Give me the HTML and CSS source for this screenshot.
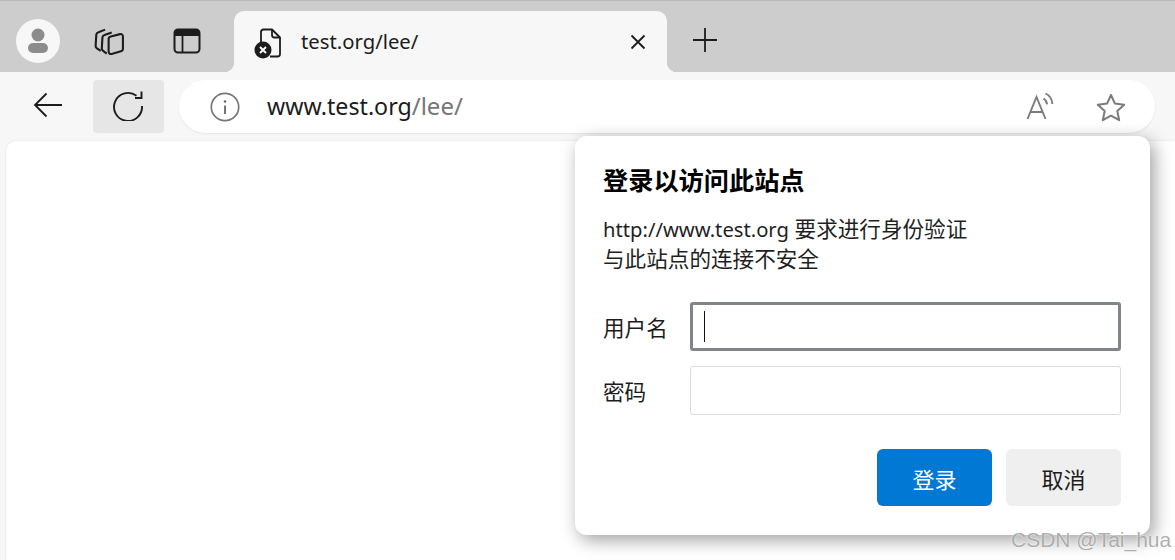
FILE: index.html
```html
<!DOCTYPE html>
<html lang="zh-CN">
<head>
  <meta charset="UTF-8">
  <meta name="viewport" content="width=device-width, initial-scale=1.0">
  <title>test.org/lee/</title>
  <link rel="stylesheet" href="styles.css">
</head>
<body>
  <div class="tabstrip">
    <div class="avatar">
      <svg width="44" height="44" viewBox="0 0 44 44"><circle cx="22" cy="16" r="6.5" fill="#8c8c8c"/><rect x="12" y="24" width="20" height="10" rx="5" fill="#8c8c8c"/></svg>
    </div>
    <div class="strip-btn btn-collections">
      <svg width="33" height="33" viewBox="0 0 30 30" fill="none" stroke="#1c1c1c" stroke-width="1.9" stroke-linejoin="round"><path d="M7 23.5 3.6 21.2c-.9-.6-1.3-1.3-1.2-2.3L3 8.8c.1-1.2.9-2 2-2.3L11 4.200"/><path d="M12.500 26 9.200 23.600c-.8-.6-1.200-1.300-1.200-2.200l.6-10.200c.1-1.100.8-1.900 1.900-2.200L17 6.800"/><path d="M16.200 10.400l8.400-2.100c1.500-.3 2.600.6 2.600 2.100v11.200c0 1.200-.7 2-1.800 2.300l-8.500 2.400c-1.500.4-2.700-.6-2.700-2.100V12.700c0-1.100.8-2 2-2.300z"/></svg>
    </div>
    <div class="strip-btn btn-vertical">
      <svg width="28" height="26" viewBox="0 0 28 26" fill="none"><rect x="1.500" y="1.500" width="25" height="23" rx="3.500" stroke="#1c1c1c" stroke-width="2"/><path d="M1.500 5c0-2 1.500-3.500 3.500-3.500h18c2 0 3.500 1.500 3.500 3.500v3h-25z" fill="#1c1c1c"/><path d="M9.500 8v16" stroke="#1c1c1c" stroke-width="1.800"/></svg>
    </div>
    <div class="tab">
      <svg class="tab-icon" width="28" height="32" viewBox="0 0 28 32" fill="none"><path d="M7 16V5c0-1.600 1-2.500 2.500-2.500H18l8 8V27c0 1.500-1 2.500-2.500 2.500H16" stroke="#1c1c1c" stroke-width="1.800" stroke-linejoin="round"/><path d="M18 2.500V8c0 1.500 1 2.500 2.500 2.500H26" stroke="#1c1c1c" stroke-width="1.800"/><circle cx="9" cy="23" r="8.500" fill="#1c1c1c"/><path d="M6 20l6 6M12 20l-6 6" stroke="#fff" stroke-width="1.900"/></svg>
      <span class="tab-title">test.org/lee/</span>
      <svg class="tab-close" width="16" height="16" viewBox="0 0 16 16"><path d="M1.500 1.500l13 13M14.500 1.500l-13 13" stroke="#1c1c1c" stroke-width="1.800"/></svg>
    </div>
    <svg class="new-tab" width="26" height="26" viewBox="0 0 26 26"><path d="M13 1v24M1 13h24" stroke="#1c1c1c" stroke-width="1.800"/></svg>
  </div>

  <div class="toolbar">
    <div class="tool-btn">
      <svg class="icon-back" width="30" height="26" viewBox="0 0 30 26" fill="none" stroke="#1c1c1c" stroke-width="1.800"><path d="M29 13H2M13.500 1.500 2 13l11.500 11.500"/></svg>
    </div>
    <div class="tool-btn tool-btn-active">
      <svg class="icon-refresh" width="32" height="32" viewBox="0 0 32 32" fill="none" stroke="#1c1c1c" stroke-width="1.900"><path d="M24.500 6.800A14 14 0 1 0 30 17"/><path d="M29.500 2.500V9H23"/></svg>
    </div>
    <div class="address">
      <svg width="30" height="30" viewBox="0 0 30 30" fill="none"><circle cx="15" cy="15" r="13.700" stroke="#777" stroke-width="1.700"/><circle cx="15" cy="9.500" r="1.300" fill="#666"/><path d="M15 13.500v8.500" stroke="#666" stroke-width="1.800"/></svg>
      <span class="url">www.test.org<span class="url-path">/lee/</span></span>
      <svg class="read-aloud" width="30" height="28" viewBox="0 0 30 28" fill="none" stroke="#7b7b7b" stroke-width="1.900"><path d="M1.500 27 10.500 5l9 22M4.500 20h12"/><path d="M17.500 6.500c2 1.200 3.300 3.200 3.600 5.800M19.500 1.500c4 1.800 6.500 5.500 6.900 10.500"/></svg>
      <svg class="star" width="32" height="30" viewBox="0 0 32 30" fill="none"><path d="M16 2l3.900 8.600 9.300 1.100-6.900 6.300 1.900 9.200L16 22.600l-8.200 4.600 1.900-9.200-6.900-6.300 9.300-1.100z" stroke="#7b7b7b" stroke-width="2" stroke-linejoin="round"/></svg>
    </div>
  </div>

  <div class="page"></div>

  <div class="dialog">
    <h1 class="dialog-title">登录以访问此站点</h1>
    <p class="dialog-text"><span class="latin">http://www.test.org</span> 要求进行身份验证<br>与此站点的连接不安全</p>
    <div class="form">
      <label class="form-label">用户名</label>
      <div class="field field-focus"><span class="caret"></span></div>
      <label class="form-label">密码</label>
      <div class="field"></div>
    </div>
    <div class="actions">
      <button class="btn btn-primary">登录</button>
      <button class="btn">取消</button>
    </div>
  </div>

  <div class="watermark">CSDN @Tai_hua</div>
</body>
</html>
```

FILE: styles.css
```css
* {
  box-sizing: border-box;
}
html, body {
  height: 100%;
}
body {
  margin: 0;
  width: 1175px;
  height: 560px;
  overflow: hidden;
  position: relative;
  display: flex;
  flex-direction: column;
  background: #f7f7f7;
  font-family: "Noto Sans", "Noto Sans CJK SC", sans-serif;
  color: #1c1c1c;
}

/* tab strip */
.tabstrip {
  height: 72px;
  flex: none;
  display: flex;
  background: #cdcdcd;
  border-top: 1px solid #b9b9b9;
}
.avatar {
  width: 44px;
  height: 44px;
  margin: 18px 0 0 16px;
  border-radius: 50%;
  background: #f7f7f7;
}
.avatar svg {
  display: block;
}
.strip-btn {
  height: 30px;
  margin-top: 25px;
  display: flex;
  align-items: center;
}
.btn-collections {
  margin-left: 33px;
}
.btn-vertical {
  margin-left: 47px;
}
.tab {
  position: relative;
  width: 433px;
  height: 61px;
  margin: 10px 0 0 33px;
  padding: 0 21px 0 20px;
  display: flex;
  align-items: center;
  background: #f7f7f7;
  border-radius: 10px 10px 0 0;
}
.tab::before,
.tab::after {
  content: "";
  position: absolute;
  bottom: 0;
  width: 10px;
  height: 10px;
}
.tab::before {
  left: -10px;
  background: radial-gradient(circle at 0 0, transparent 10px, #f7f7f7 10.5px);
}
.tab::after {
  right: -10px;
  background: radial-gradient(circle at 100% 0, transparent 10px, #f7f7f7 10.5px);
}
.tab-icon {
  margin-top: 2px;
  flex: none;
}
.tab-title {
  margin-left: 19px;
  font-size: 20.3px;
  flex: 1;
  margin-top: -2px;
}
.tab-close {
  flex: none;
}
.new-tab {
  margin: 26px 0 0 25px;
}

/* toolbar */
.toolbar {
  height: 68px;
  flex: none;
  padding: 8px 20px 7px 12px;
  display: flex;
  background: #f7f7f7;
}
.tool-btn {
  width: 71px;
  height: 53px;
  display: flex;
  align-items: center;
  justify-content: center;
  border-radius: 4px;
}
.tool-btn:first-child {
  margin-right: 10px;
}
.tool-btn-active {
  background: #e6e6e6;
}
.icon-back {
  margin-top: -3px;
}
.icon-refresh {
  margin: -3px 1px 0 0;
}
.address {
  flex: 1;
  margin-left: 15px;
  padding: 0 28px 0 31px;
  display: flex;
  align-items: center;
  background: #fff;
  border-radius: 27px;
  box-shadow: 0 1px 2px rgba(0, 0, 0, 0.08);
}
.url {
  margin: -2px 0 0 27px;
  flex: 1;
  font-size: 23.2px;
  color: #1c1c1c;
}
.url-path {
  font-size: 24px;
  color: #767676;
}
.read-aloud {
  margin-top: -2px;
}
.star {
  margin: 2px 0 0 39px;
}

/* page area */
.page {
  flex: 1;
  margin: 1px 0 0 6px;
  background: #fff;
  border-top-left-radius: 10px;
  box-shadow: 0 0 2px rgba(0, 0, 0, 0.12);
}

/* auth popup */
.dialog {
  position: absolute;
  left: 575px;
  top: 136px;
  width: 575px;
  height: 399px;
  padding: 27px 29px 0 28px;
  background: #fff;
  border-radius: 12px;
  box-shadow: 4px 5px 18px rgba(0, 0, 0, 0.38);
}
.dialog-title {
  margin: 0;
  font-size: 25.2px;
  line-height: 34px;
  font-weight: 700;
  color: #000;
}
.dialog-text {
  margin: 17px 0 0;
  font-size: 21.6px;
  line-height: 30px;
  color: #1f1f1f;
}
.latin {
  font-size: 20.2px;
}
.form {
  margin-top: 28px;
  display: grid;
  grid-template-columns: 87px 1fr;
  row-gap: 15px;
  align-items: center;
}
.form-label {
  font-size: 21.6px;
}
.field {
  height: 49px;
  background: #fff;
  border: 1px solid #dcdcdc;
  border-radius: 3px;
  display: flex;
  align-items: center;
}
.field-focus {
  border: 3px solid #80858b;
}
.caret {
  width: 1px;
  height: 31px;
  margin-left: 11px;
  background: #111;
}
.actions {
  margin-top: 34px;
  display: flex;
  justify-content: flex-end;
  gap: 14px;
}
.btn {
  width: 115px;
  height: 57px;
  border: none;
  border-radius: 6px;
  background: #efefef;
  color: #1c1c1c;
  font-family: inherit;
  font-size: 22px;
}
.btn-primary {
  background: #0078d4;
  color: #fff;
}

.watermark {
  position: absolute;
  left: 1011px;
  top: 526px;
  font-family: "Liberation Sans", sans-serif;
  font-size: 21px;
  line-height: 28px;
  white-space: nowrap;
  color: rgba(140, 140, 140, 0.7);
  text-shadow: 0 0 2px #fff;
}
```
